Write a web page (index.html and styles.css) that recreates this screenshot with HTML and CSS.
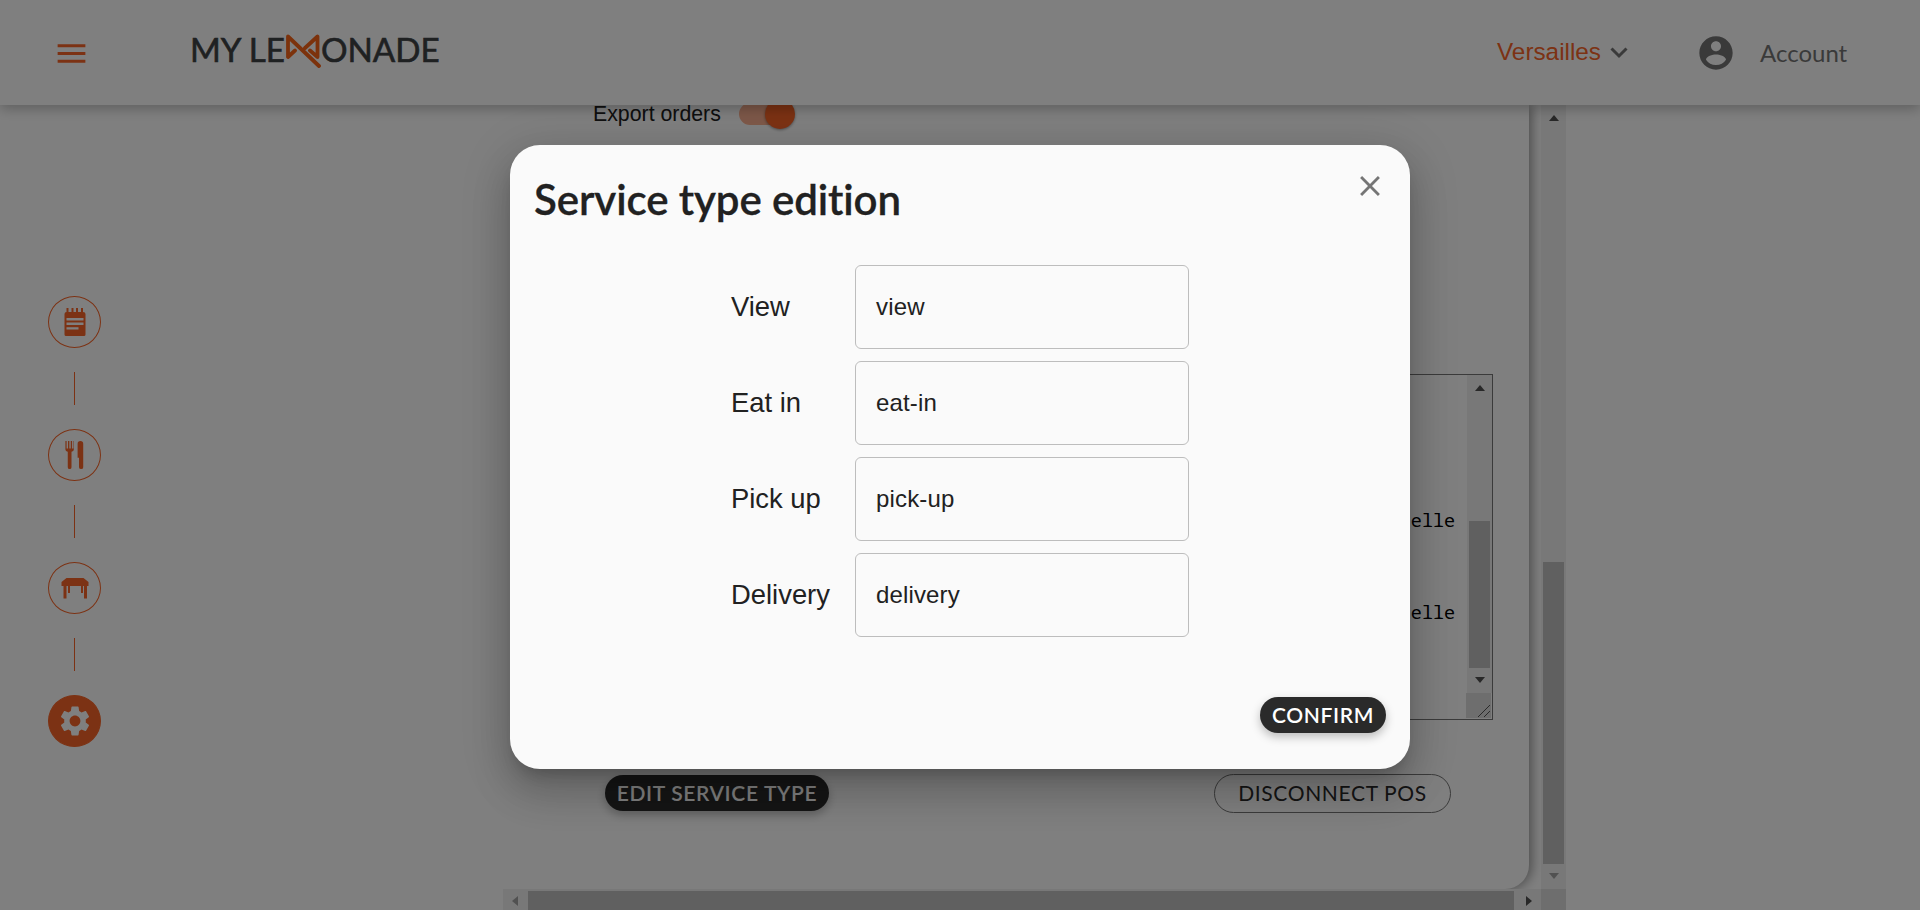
FILE: index.html
```html
<!DOCTYPE html>
<html lang="en">
<head>
<meta charset="utf-8">
<title>My Lemonade</title>
<link rel="stylesheet" href="styles.css">
</head>
<body>
<div class="app">
  <header class="header">
    <svg class="menu-icon" viewBox="0 0 24 24"><path d="M3 18h18v-2H3v2zm0-5h18v-2H3v2zm0-7v2h18V6H3z"/></svg>
    <div class="logo">
      <span class="logo-text">MY LE</span>
      <svg class="logo-mark" viewBox="0 0 36 34"><path d="M10 16.500L3 23V2.500L34 32M20 14L32.500 2.500V23L25 16.500"/></svg>
      <span class="logo-text">ONADE</span>
    </div>
    <div class="place">Versailles
      <svg class="chevron" viewBox="0 0 20 14"><path d="M2.500 2.500L10 10l7.500-7.500"/></svg>
    </div>
    <svg class="account-icon" viewBox="0 0 24 24"><path d="M12 2C6.480 2 2 6.480 2 12s4.480 10 10 10 10-4.480 10-10S17.520 2 12 2zm0 3c1.660 0 3 1.340 3 3s-1.340 3-3 3-3-1.340-3-3 1.340-3 3-3zm0 14.200c-2.500 0-4.710-1.280-6-3.220.030-1.990 4-3.080 6-3.080 1.990 0 5.970 1.090 6 3.080-1.290 1.940-3.500 3.220-6 3.220z"/></svg>
    <span class="account">Account</span>
  </header>

  <div class="body">
    <nav class="steps">
      <a class="step"><svg viewBox="0 0 22 30"><path d="M2.500 1h2v4h3V1h2v4h2.500V1h2v4h3V1h2v4Q21.500 5 21.500 7v20.500q0 1.500-1.500 1.500H2Q.500 29 .500 27.500V7Q.500 5 2.500 5z"/><path class="cut" d="M2.500 11h17v2.400h-17zM2.500 15.600h17V18h-17zM2.500 20.200h12v2.400h-12z"/></svg></a>
      <i class="link"></i>
      <a class="step"><svg viewBox="0 0 22 32"><path d="M1.500 1h1.300v8h1.500V1h1.400v8h1.500V1h1.400v8H10V1h.500v9q0 2-2.500 2.500V29q0 2-2 2t-2-2V12.500Q1.500 12 1.500 10zM14.500 19V4q0-3 3-3t3 3v25q0 2-2.200 2t-2.300-2V19z"/></svg></a>
      <i class="link"></i>
      <a class="step"><svg class="wide" viewBox="0 0 28 22"><path d="M5.500 1h17L27.500 5v4H26v12.500h-3V9h-1v7h-2V9H9v7H7V9H5.500v12.500h-3V9H.500V5z"/></svg></a>
      <i class="link"></i>
      <a class="step active"><svg class="gear" viewBox="0 0 24 24"><path d="M19.140 12.940c.040-.3.060-.610.060-.940 0-.320-.020-.640-.070-.940l2.030-1.580c.180-.140.230-.410.120-.610l-1.920-3.320c-.120-.220-.370-.290-.590-.220l-2.390.960c-.5-.380-1.030-.7-1.620-.940l-.360-2.540c-.040-.240-.240-.410-.480-.410h-3.840c-.240 0-.430.170-.470.410l-.360 2.540c-.590.240-1.130.570-1.620.940l-2.390-.960c-.220-.080-.470 0-.590.220L2.740 8.870c-.120.210-.080.470.120.610l2.030 1.580c-.050.300-.090.630-.090.940s.020.640.070.940l-2.030 1.580c-.180.140-.230.410-.120.610l1.920 3.320c.120.220.370.290.590.220l2.390-.960c.5.380 1.030.7 1.620.940l.360 2.540c.050.240.240.410.480.410h3.840c.240 0 .440-.170.470-.410l.360-2.540c.590-.240 1.130-.560 1.620-.940l2.390.960c.220.080.470 0 .590-.220l1.920-3.320c.120-.220.070-.470-.120-.610l-2.010-1.580zM12 15.600c-1.980 0-3.600-1.620-3.600-3.600s1.620-3.600 3.600-3.600 3.600 1.620 3.600 3.600-1.620 3.600-3.600 3.600z"/></svg></a>
    </nav>

    <main class="pane">
      <div class="view">
        <section class="card">
          <div class="export">Export orders <span class="switch"><i class="knob"></i></span></div>
          <div class="log">
            <pre class="log-text">elle



elle</pre>
            <div class="log-side">
              <div class="vbar log-bar"><i class="arrow up"></i><i class="thumb log-thumb"></i><i class="arrow down"></i></div>
              <svg class="grip" viewBox="0 0 25 25"><path d="M12 24L24 12M18 24l6-6"/></svg>
            </div>
          </div>
          <div class="actions">
            <button class="btn dark edit">EDIT SERVICE TYPE</button>
            <button class="btn outline">DISCONNECT POS</button>
          </div>
        </section>
      </div>
      <div class="vbar pane-bar"><i class="arrow up"></i><i class="thumb pane-thumb"></i><i class="arrow down dim"></i></div>
      <div class="hbar"><i class="arrow left dim"></i><i class="hthumb"></i><i class="arrow right"></i></div>
      <div class="corner"></div>
    </main>
  </div>
</div>

<div class="backdrop">
  <div class="dialog">
    <div class="dialog-head">
      <h2 class="title">Service type edition</h2>
      <svg class="close" viewBox="0 0 24 24"><path d="M19 6.410L17.590 5 12 10.590 6.410 5 5 6.410 10.590 12 5 17.590 6.410 19 12 13.410 17.590 19 19 17.590 13.410 12z"/></svg>
    </div>
    <div class="fields">
      <label class="label">View</label><div class="input">view</div>
      <label class="label">Eat in</label><div class="input">eat-in</div>
      <label class="label">Pick up</label><div class="input">pick-up</div>
      <label class="label">Delivery</label><div class="input">delivery</div>
    </div>
    <div class="dialog-foot"><button class="btn dark confirm">CONFIRM</button></div>
  </div>
</div>
</body>
</html>
```

FILE: styles.css
```css
* { box-sizing: border-box; }
body {
  margin: 0;
  height: 910px;
  overflow: hidden;
  background: #fff;
  color: #212121;
  font-family: "Liberation Sans", Arial, sans-serif;
}
.app { height: 910px; display: flex; flex-direction: column; }

.header {
  position: relative;
  z-index: 1;
  flex: none;
  height: 105px;
  display: flex;
  align-items: center;
  background: #fff;
  box-shadow: 0 4px 12px rgba(0, 0, 0, .25);
}
.menu-icon { width: 37px; height: 37px; margin: 1px 0 0 53px; fill: #f96528; }
.logo { display: flex; margin-left: 100px; height: 40px; margin-top: -7px; }
.logo-text { font: 400 33.200px/40px Lato, sans-serif; color: #3e4244; -webkit-text-stroke: .6px #3e4244; }
.logo-mark { width: 36px; height: 34px; margin-top: 5px; fill: none; stroke: #f96518; stroke-width: 3.800; stroke-linejoin: round; stroke-linecap: round; }
.place { display: flex; align-items: center; gap: 8px; margin: -1px 0 0 auto; font-size: 24.300px; color: #f96528; }
.chevron { width: 20px; height: 14px; margin-top: 2px; fill: none; stroke: #757575; stroke-width: 3; }
.account-icon { width: 40px; height: 40px; margin-left: 67px; fill: #757575; }
.account { width: 160px; margin-left: 24px; font: 24px/30px Lato, sans-serif; color: #757575; }

.body { flex: 1; display: flex; min-height: 0; }
.steps { width: 503px; padding: 191px 0 0 48px; display: flex; flex-direction: column; gap: 24px; }
.step {
  width: 53px;
  height: 52px;
  flex: none;
  display: flex;
  align-items: center;
  justify-content: center;
  border: 1px solid #f96528;
  border-radius: 50%;
}
.step svg { height: 30px; fill: #f96528; }
.step svg.wide { height: 22px; width: 28px; }
.step .cut { fill: #fff; }
.step.active { background: #f96528; }
.step svg.gear { width: 36px; height: 36px; fill: #fff; }
.link { width: 1px; height: 33px; margin-left: 26px; flex: none; background: #f96528; }

.pane { width: 1063px; display: grid; grid-template: 784px 21px / 1038px 25px; }
.view { overflow: hidden; }
.card {
  display: flex;
  flex-direction: column;
  width: 1026px;
  height: 784px;
  padding: 0 36px 0 90px;
  border-radius: 0 0 24px 0;
  box-shadow: 3px 0 12px rgba(0, 0, 0, .4);
}
.export { display: flex; align-items: center; height: 30px; margin-top: -6px; font-size: 21.300px; gap: 18px; }
.switch { display: flex; justify-content: flex-end; align-items: center; width: 50px; height: 22px; border-radius: 11px; background: #fcb293; }
.knob { flex: none; width: 30px; height: 30px; margin-right: -6px; border-radius: 50%; background: #f96528; box-shadow: 0 1px 3px rgba(0, 0, 0, .4); }
.log { display: flex; justify-content: flex-end; height: 346px; margin-top: 245px; border: 1px solid #767676; }
.log-text { margin: 133px 11px 0 0; font: 18.400px/23px "Noto Sans Mono", "DejaVu Sans Mono", monospace; color: #000; }
.log-side { width: 26px; }
.vbar { display: flex; flex-direction: column; align-items: center; background: #f1f1f1; }
.log-bar { width: 25px; height: 318px; margin-left: 1px; }
.arrow { width: 0; height: 0; flex: none; border: 5.500px solid transparent; }
.up { margin-top: 10px; border-bottom: 6px solid #505050; border-top: 0; }
.down { border-top: 6px solid #505050; border-bottom: 0; }
.down.dim { border-top-color: #a3a3a3; }
.left { border-right: 6px solid #a3a3a3; border-left: 0; margin: 3px 10px 0 9px; }
.right { border-left: 6px solid #505050; border-right: 0; margin: 3px 0 0 12px; }
.thumb { width: 21px; flex: none; background: #c1c1c1; }
.log-thumb { height: 147px; margin: 130px 0 9px; }
.grip { display: block; width: 25px; height: 25px; background: #dcdcdc; fill: none; stroke: #555; stroke-width: 1; }
.actions { display: flex; justify-content: space-between; align-items: flex-start; margin-top: 54px; padding: 0 42px 0 12px; }
.pane-thumb { height: 302px; margin: 441px 0 9px; }
.hbar { display: flex; align-items: center; background: #f1f1f1; }
.hthumb { width: 986px; height: 19px; margin-top: 2px; background: #c1c1c1; }
.corner { background: #dcdcdc; }

.btn { display: flex; align-items: center; justify-content: center; padding: 0; height: 36px; border: 0; border-radius: 20px; font: 21px/24px Lato, sans-serif; white-space: nowrap; }
.dark { background: #2a2a2a; color: #fff; font-weight: 600; letter-spacing: .65px; box-shadow: 0 4px 10px rgba(0, 0, 0, .25); }
.edit { width: 224px; margin-top: 1px; }
.confirm { width: 126px; }
.outline { width: 237px; height: 39px; padding-bottom: 2px; border: 1px solid #767676; background: none; color: #2a2a2a; letter-spacing: .65px; }

.backdrop {
  position: absolute;
  inset: 0;
  z-index: 2;
  display: flex;
  justify-content: center;
  align-items: flex-start;
  padding-top: 145px;
  background: rgba(0, 0, 0, .5);
}
.dialog {
  width: 900px;
  height: 624px;
  border-radius: 30px;
  background: #fafafa;
  box-shadow: 0 11px 15px -7px rgba(0, 0, 0, .2), 0 24px 38px 3px rgba(0, 0, 0, .14), 0 9px 46px 8px rgba(0, 0, 0, .12);
}
.dialog-head { display: flex; justify-content: space-between; height: 120px; padding: 24px 23px 0 24px; }
.title { margin: 4px 0 0; font: 600 42px/52px Lato, sans-serif; font-variant-ligatures: none; -webkit-text-stroke: .3px #212121; letter-spacing: -.1px; }
.close { width: 34px; height: 34px; fill: #757575; }
.fields { display: grid; grid-template-columns: 124px 334px; grid-auto-rows: 84px; gap: 12px 0; margin-left: 221px; }
.label { font-size: 27.400px; line-height: 84px; }
.input { padding-left: 20px; border: 1px solid #bdbdbd; border-radius: 6px; font-size: 24px; line-height: 82px; letter-spacing: .15px; }
.dialog-foot { display: flex; justify-content: flex-end; padding: 60px 24px 0 0; }
```
